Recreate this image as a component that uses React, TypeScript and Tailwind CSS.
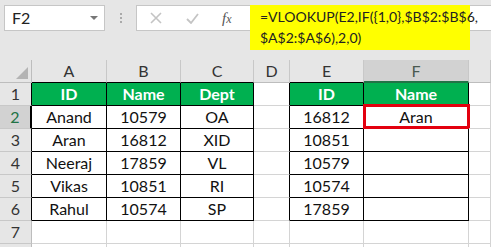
import React from 'react'

const cols = ['A', 'B', 'C', 'D', 'E', 'F', '']

type Cell = { v: string; head?: boolean }

const rows: (Cell | null)[][] = [
  [{ v: 'ID', head: true }, { v: 'Name', head: true }, { v: 'Dept', head: true }, null, { v: 'ID', head: true }, { v: 'Name', head: true }, null],
  [{ v: 'Anand' }, { v: '10579' }, { v: 'OA' }, null, { v: '16812' }, { v: 'Aran' }, null],
  [{ v: 'Aran' }, { v: '16812' }, { v: 'XID' }, null, { v: '10851' }, { v: '' }, null],
  [{ v: 'Neeraj' }, { v: '17859' }, { v: 'VL' }, null, { v: '10579' }, { v: '' }, null],
  [{ v: 'Vikas' }, { v: '10851' }, { v: 'RI' }, null, { v: '10574' }, { v: '' }, null],
  [{ v: 'Rahul' }, { v: '10574' }, { v: 'SP' }, null, { v: '17859' }, { v: '' }, null],
  [null, null, null, null, null, null, null],
  [null, null, null, null, null, null, null],
]

// c is 0-based data column (A = 0), r is 0-based data row (row 1 = 0)
const inTable = (r: number, c: number) => r >= 0 && r <= 5 && (c <= 2 || c === 4 || c === 5) && c >= 0

function TopBar() {
  return (
    <div className="relative h-[60px] bg-[#e6e6e6]">
      <div className="absolute left-[4px] top-[5px] flex h-[26px] w-[101px] items-center justify-between border border-[#c6c6c6] bg-white pl-[7px] pr-[6px] text-[16px] text-[#222]">
        <span>F2</span>
        <span className="h-0 w-0 border-x-[4px] border-t-[4px] border-x-transparent border-t-[#777]" />
      </div>
      <div className="absolute left-[120px] top-[13px] flex flex-col gap-[2px]">
        <span className="h-[2px] w-[2px] bg-[#aaa]" />
        <span className="h-[2px] w-[2px] bg-[#aaa]" />
        <span className="h-[2px] w-[2px] bg-[#aaa]" />
      </div>
      <div className="absolute left-[136px] top-[5px] flex h-[26px] w-[115px] items-center border border-[#c6c6c6] bg-white">
        <svg width="12" height="12" viewBox="0 0 12 12" className="ml-[13px]">
          <path d="M1 1L11 11M11 1L1 11" stroke="#c4c4c4" strokeWidth="1.6" />
        </svg>
        <svg width="13" height="11" viewBox="0 0 13 11" className="ml-[24px]">
          <path d="M1 6L5 10L12 1" stroke="#c4c4c4" strokeWidth="1.8" fill="none" />
        </svg>
        <span className="ml-[23px] font-['Liberation_Serif',serif] text-[15px] italic text-[#555]">
          f<span className="text-[12px]">x</span>
        </span>
      </div>
      <div className="absolute left-[250px] right-0 top-[5px] h-[26px] border-y border-l border-[#c6c6c6] bg-white" />
      <div className="absolute left-[250px] top-[5px] h-[45px] w-[220px] whitespace-nowrap bg-[#ffff00] pl-[10px] pt-[1px] text-[14px] leading-[21px] text-[#222]">
        =VLOOKUP(E2,IF({'{'}1,0{'}'},$B$2:$B$6,
        <br />
        $A$2:$A$6),2,0)
      </div>
    </div>
  )
}

export default function App() {
  return (
    <div className="h-[247px] w-[491px] overflow-hidden bg-white font-['Lato',sans-serif]">
      <TopBar />
      <div className="grid grid-cols-[32px_75px_74px_73px_36px_74px_105px_22px] auto-rows-[23px]">
        {/* corner */}
        <div className="relative border-b border-r border-[#bdbdbd] bg-[#e6e6e6]">
          <span className="absolute bottom-[3px] right-[3px] h-0 w-0 border-b-[12px] border-l-[12px] border-b-[#b4b4b4] border-l-transparent" />
        </div>
        {cols.map((c, i) => {
          const sel = i === 5
          const black = inTable(0, i)
          return (
            <div
              key={'h' + i}
              className={`flex items-center justify-center border-r text-[16px] ${
                sel ? 'border-b-2 border-b-[#217346] bg-[#d2d2d2] text-[#4a5a50]' : 'border-b bg-[#e6e6e6] text-[#333]'
              } ${black && !sel ? 'border-b-black' : !sel ? 'border-b-[#bdbdbd]' : ''} border-r-[#c8c8c8]`}
            >
              {c}
            </div>
          )
        })}
        {rows.map((row, r) => (
          <React.Fragment key={r}>
            <div
              className={`flex items-center justify-center border-b text-[16px] ${
                r === 1
                  ? 'border-r-2 border-r-[#217346] bg-[#d2d2d2] text-[#217346]'
                  : 'border-r border-r-[#bdbdbd] bg-[#e6e6e6] text-[#333]'
              } border-b-[#c8c8c8] ${inTable(r, 0) ? 'border-r-black' : ''}`}
            >
              {r < 7 ? r + 1 : ''}
            </div>
            {row.map((cell, c) => {
              const right = inTable(r, c) || inTable(r, c + 1)
              const bottom = inTable(r, c) || inTable(r + 1, c)
              return (
                <div
                  key={c}
                  className={`relative flex items-center justify-center border-b border-r text-[16px] ${
                    right ? 'border-r-black' : 'border-r-[#d4d4d4]'
                  } ${bottom ? 'border-b-black' : 'border-b-[#d4d4d4]'} ${
                    cell?.head ? 'bg-[#00b050] font-bold text-white' : 'text-[#111]'
                  }`}
                >
                  {cell?.v}
                  {r === 1 && c === 5 && (
                    <span className="absolute -bottom-[1px] -left-[1px] -right-[2px] -top-[2px] border-[3px] border-[#e3000f]" />
                  )}
                </div>
              )
            })}
          </React.Fragment>
        ))}
      </div>
    </div>
  )
}
